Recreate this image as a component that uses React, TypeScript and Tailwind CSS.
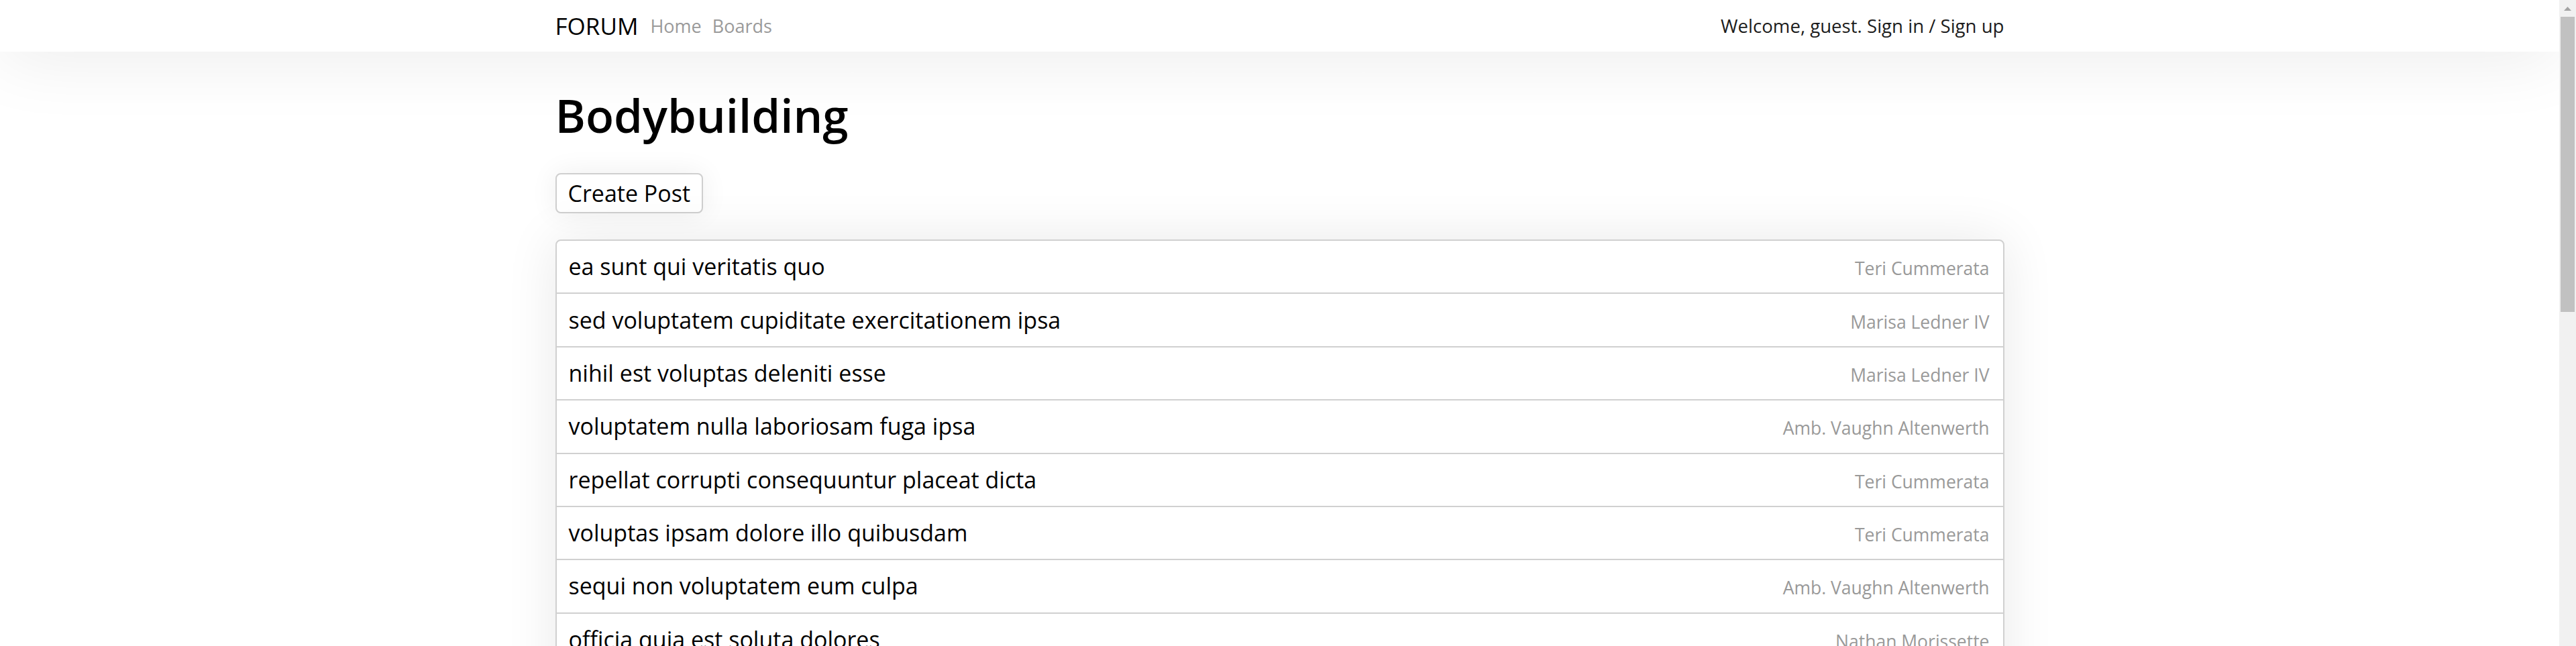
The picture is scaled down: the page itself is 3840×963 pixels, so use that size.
const posts = [
  { title: 'ea sunt qui veritatis quo', author: 'Teri Cummerata' },
  { title: 'sed voluptatem cupiditate exercitationem ipsa', author: 'Marisa Ledner IV' },
  { title: 'nihil est voluptas deleniti esse', author: 'Marisa Ledner IV' },
  { title: 'voluptatem nulla laboriosam fuga ipsa', author: 'Amb. Vaughn Altenwerth' },
  { title: 'repellat corrupti consequuntur placeat dicta', author: 'Teri Cummerata' },
  { title: 'voluptas ipsam dolore illo quibusdam', author: 'Teri Cummerata' },
  { title: 'sequi non voluptatem eum culpa', author: 'Amb. Vaughn Altenwerth' },
  { title: 'officia quia est soluta dolores', author: 'Nathan Morissette' },
  { title: 'aut quos dolorem tempora', author: 'Marisa Ledner IV' }
];

function Scrollbar() {
  return (
    <div className="flex h-full w-[25px] shrink-0 flex-col items-center bg-[#f1f1f1]">
      <div className="flex h-[25px] w-full items-center justify-center">
        <svg width="11" height="6" viewBox="0 0 11 6">
          <path d="M5.5 0 L11 6 L0 6 Z" fill="#a3a3a3" />
        </svg>
      </div>
      <div className="h-[440px] w-[21px] bg-[#c1c1c1]" />
    </div>
  );
}

export default function App() {
  return (
    <div className="flex h-[963px] w-full overflow-hidden bg-white font-['Open_Sans',sans-serif] text-black">
      <div className="min-w-0 flex-1 overflow-hidden">
        <header className="relative z-10 flex h-[77px] items-center bg-white shadow-[0_0_110px_rgba(0,0,0,0.1)]">
          <div className="mx-auto flex w-[2160px] items-center justify-between">
            <nav className="flex items-center">
              <a className="mr-[18px] text-[35px] leading-[48px] text-black">FORUM</a>
              <a className="mr-[16px] text-[27px] leading-[37px] text-[#9a9a9a]">Home</a>
              <a className="text-[27px] leading-[37px] text-[#9a9a9a]">Boards</a>
            </nav>
            <div className="text-[27.6px] leading-[37px] text-[#1c1c1c]">
              Welcome, guest. Sign in / Sign up
            </div>
          </div>
        </header>

        <main className="mx-auto w-[2160px] pt-[52px]">
          <h1 className="text-[69px] font-semibold leading-[84px]">Bodybuilding</h1>

          <button
            type="button"
            className="mt-[45px] flex h-[60px] items-center rounded-[8px] border-2 border-[#cfcfcf] bg-white px-[17px] text-[34px] leading-[45px] shadow-[0_0_40px_rgba(0,0,0,0.07)]"
          >
            Create Post
          </button>

          <div className="mt-[39px] overflow-hidden rounded-[8px] border-2 border-[#d0d0d0] bg-white shadow-[0_0_80px_rgba(0,0,0,0.09)]">
            <ul className="divide-y-2 divide-[#d0d0d0]">
              {posts.map((p, i) => (
                <li key={i} className="flex items-baseline justify-between px-[18px] py-[16.2px] pr-[20px]">
                  <span className="text-[34px] leading-[45px] text-black">{p.title}</span>
                  <span className="text-[26.5px] leading-[34px] text-[#999999]">{p.author}</span>
                </li>
              ))}
            </ul>
          </div>
        </main>
      </div>
      <Scrollbar />
    </div>
  );
}
